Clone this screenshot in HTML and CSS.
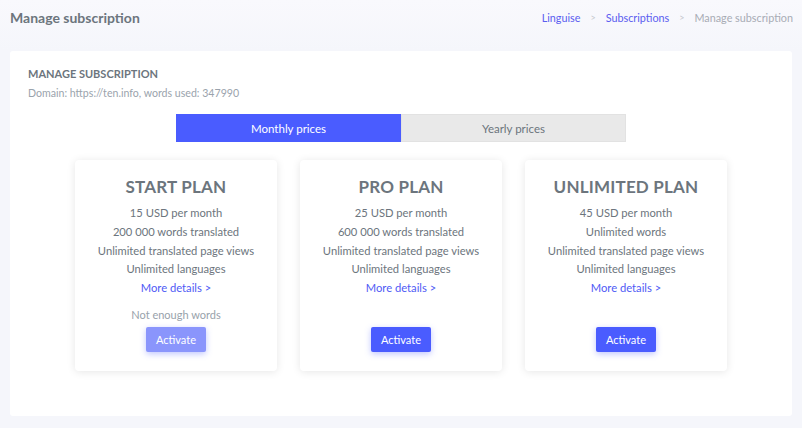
FILE: index.html
```html
<!DOCTYPE html>
<html>
<head>
<meta charset="utf-8">
<link rel="stylesheet" href="styles.css">
</head>
<body>
<div class="topbar">
  <h1 class="page-title">Manage subscription</h1>
  <nav class="crumbs">
    <a class="crumb-link">Linguise</a>
    <span class="sep">&gt;</span>
    <a class="crumb-link">Subscriptions</a>
    <span class="sep">&gt;</span>
    <span class="crumb-current">Manage subscription</span>
  </nav>
</div>
<div class="main-card">
  <h2 class="section-title">MANAGE SUBSCRIPTION</h2>
  <p class="domain">Domain: https://ten.info, words used: 347990</p>
  <div class="tabs">
    <div class="tab active">Monthly prices</div>
    <div class="tab">Yearly prices</div>
  </div>
  <div class="plans">
    <div class="plan">
      <h3 class="plan-title">START PLAN</h3>
      <p class="feat">15 USD per month</p>
      <p class="feat">200 000 words translated</p>
      <p class="feat">Unlimited translated page views</p>
      <p class="feat">Unlimited languages</p>
      <a class="more">More details &gt;</a>
      <p class="notice">Not enough words</p>
      <button class="btn disabled">Activate</button>
    </div>
    <div class="plan">
      <h3 class="plan-title">PRO PLAN</h3>
      <p class="feat">25 USD per month</p>
      <p class="feat">600 000 words translated</p>
      <p class="feat">Unlimited translated page views</p>
      <p class="feat">Unlimited languages</p>
      <a class="more">More details &gt;</a>
      <p class="notice empty"></p>
      <button class="btn">Activate</button>
    </div>
    <div class="plan">
      <h3 class="plan-title">UNLIMITED PLAN</h3>
      <p class="feat">45 USD per month</p>
      <p class="feat">Unlimited words</p>
      <p class="feat">Unlimited translated page views</p>
      <p class="feat">Unlimited languages</p>
      <a class="more">More details &gt;</a>
      <p class="notice empty"></p>
      <button class="btn">Activate</button>
    </div>
  </div>
</div>
</body>
</html>
```
FILE: styles.css
```css
* { box-sizing: border-box; }
html, body { margin: 0; padding: 0; }
body {
  background: #f5f6fb;
  font-family: "Lato", "Open Sans", sans-serif;
  color: #6c757d;
  width: 802px;
  height: 428px;
  overflow: hidden;
}
.topbar {
  height: 51px;
  display: flex;
  align-items: center;
  justify-content: space-between;
  padding: 0 9px 0 10px;
  background: linear-gradient(#f9f9fd, #f5f6fb);
}
.page-title {
  margin: 0;
  font-size: 14px;
  font-weight: 700;
  color: #6c757d;
  margin-top: -16px;
}
.crumbs {
  display: flex;
  align-items: center;
  gap: 10px;
  font-size: 10.8px;
  margin-top: -16px;
}
.crumb-link { color: #5b5ef0; }
.crumb-current { color: #a8acb5; }
.sep { color: #c4c7cd; font-size: 9px; }
.main-card {
  margin: 0 10px;
  background: #fff;
  border-radius: 3px;
  height: 365px;
  padding: 16px 18px;
}
.section-title {
  margin: 0;
  font-size: 11px;
  font-weight: 700;
  color: #6c757d;
}
.domain {
  margin: 7px 0 0;
  font-size: 10.6px;
  color: #9aa3ac;
}
.tabs {
  display: flex;
  width: 450px;
  margin: 15px auto 0;
}
.tab {
  flex: 1;
  height: 28px;
  display: flex;
  align-items: center;
  justify-content: center;
  font-size: 11.5px;
  background: #e9e9e9;
  color: #6c757d;
  border: 1px solid #e2e2e2;
}
.tab.active {
  background: #4a5cff;
  border-color: #4a5cff;
  color: #fff;
}
.plans {
  display: flex;
  justify-content: center;
  gap: 23px;
  margin-top: 18px;
}
.plan {
  width: 202px;
  height: 211px;
  background: #fff;
  border-radius: 4px;
  box-shadow: 0 1px 8px rgba(0,0,0,0.10);
  display: flex;
  flex-direction: column;
  align-items: center;
  padding-top: 17px;
}
.plan-title {
  margin: 0 0 7px;
  font-size: 17px;
  line-height: 20px;
  font-weight: 700;
  color: #6c757d;
  letter-spacing: 0.2px;
}
.feat {
  margin: 0;
  font-size: 11.2px;
  line-height: 18.8px;
  color: #6c757d;
}
.more {
  font-size: 11.2px;
  line-height: 18.8px;
  color: #4f5bf5;
}
.notice {
  margin: 9px 0 0;
  font-size: 11px;
  line-height: 16px;
  height: 16px;
  color: #98a2ab;
}
.btn {
  margin-top: 4px;
  width: 60px;
  height: 25px;
  border: none;
  border-radius: 2px;
  background: #4a5cff;
  color: #fff;
  font-family: inherit;
  font-size: 11px;
  box-shadow: 0 2px 6px rgba(74,92,255,0.35);
  padding: 0;
}
.btn.disabled {
  background: #8a95fc;
}
```
